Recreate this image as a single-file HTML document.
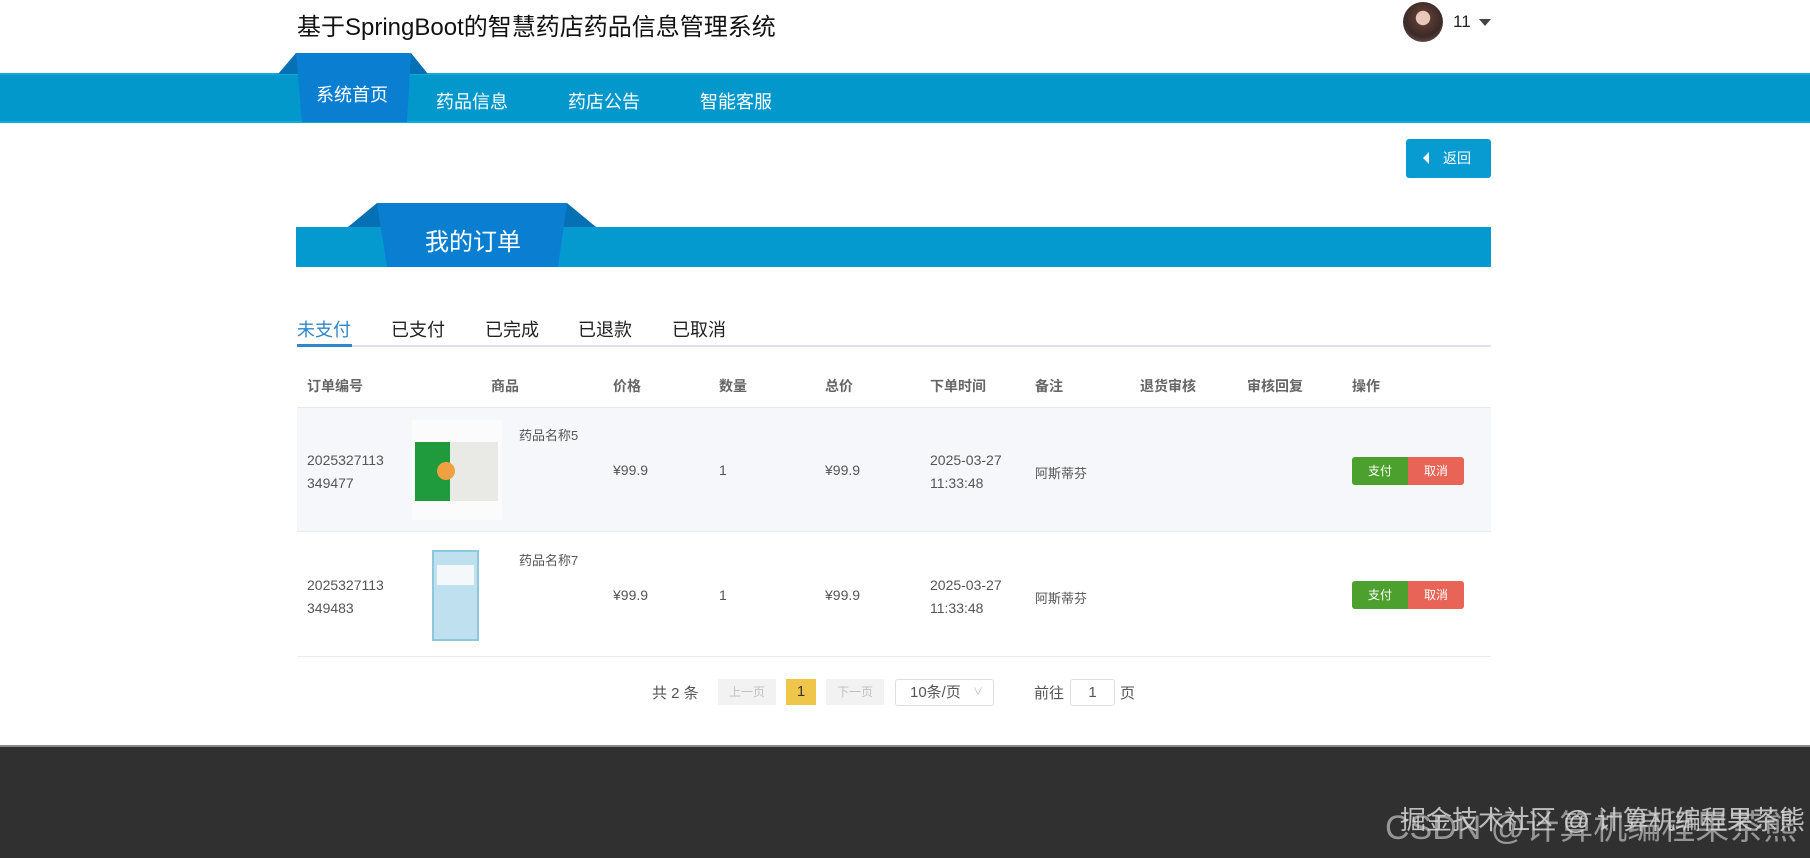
<!DOCTYPE html>
<html><head><meta charset="utf-8">
<style>
*{margin:0;padding:0;box-sizing:border-box}
body{width:1810px;height:858px;position:relative;background:#fff;font-family:"Liberation Sans","Noto Sans CJK SC",sans-serif;overflow:hidden;color:#333}
.a{position:absolute;white-space:nowrap}
.hd{font-size:14px;font-weight:bold;color:#666;top:376px}
.td{font-size:14px;color:#555}
</style></head><body>
<div class="a" style="left:297px;top:7px;font-size:24px;color:#111">基于SpringBoot的智慧药店药品信息管理系统</div>
<div class="a" style="left:1403px;top:2px;width:40px;height:40px;border-radius:50%;background:radial-gradient(circle at 50% 40%,#e8c8b8 0 22%,#5a3a30 24%,#3a2a28 60%,#8a7068 100%)"></div>
<div class="a" style="left:1453px;top:12px;font-size:17px;color:#222">11</div>
<div class="a" style="left:1479px;top:19px;width:0;height:0;border-left:6px solid transparent;border-right:6px solid transparent;border-top:7px solid #444"></div>
<div class="a" style="left:0;top:73px;width:1810px;height:50px;background:#0398cc;border-top:2px solid #12a8d8;border-bottom:2px solid #12a8d8"></div>
<svg class="a" style="left:270px;top:52px" width="170" height="72">
<polygon points="8,22 26,1 141,1 158,22" fill="#0670b5"/>
<polygon points="26,1 141,1 137,70 32,70" fill="#0a7fd2"/>
</svg>
<div class="a" style="left:316px;top:81px;font-size:18px;color:#fff">系统首页</div>
<div class="a" style="left:436px;top:88px;font-size:18px;color:#fff">药品信息</div>
<div class="a" style="left:568px;top:88px;font-size:18px;color:#fff">药店公告</div>
<div class="a" style="left:700px;top:88px;font-size:18px;color:#fff">智能客服</div>
<div class="a" style="left:1406px;top:139px;width:85px;height:39px;background:#079bd1;border-radius:3px;color:#fff;font-size:14px;line-height:39px;padding-left:37px">返回</div>
<div class="a" style="left:1423px;top:152px;width:0;height:0;border-top:6px solid transparent;border-bottom:6px solid transparent;border-right:6px solid #fff"></div>
<div class="a" style="left:296px;top:227px;width:1195px;height:40px;background:#049ad0"></div>
<svg class="a" style="left:340px;top:202px" width="270" height="66">
<polygon points="8,25 37,1 227,1 256,25" fill="#0670b5"/>
<polygon points="37,1 227,1 218,65 47,65" fill="#0a7fd2"/>
</svg>
<div class="a" style="left:425px;top:222px;font-size:24px;color:#fff">我的订单</div>
<div class="a" style="left:297px;top:316px;font-size:18px;color:#2f86c8">未支付</div>
<div class="a" style="left:391px;top:316px;font-size:18px;color:#222">已支付</div>
<div class="a" style="left:485px;top:316px;font-size:18px;color:#222">已完成</div>
<div class="a" style="left:578px;top:316px;font-size:18px;color:#222">已退款</div>
<div class="a" style="left:672px;top:316px;font-size:18px;color:#222">已取消</div>
<div class="a" style="left:297px;top:345px;width:1194px;height:2px;background:#dde3ea"></div>
<div class="a" style="left:297px;top:344px;width:55px;height:3px;background:#2f86c8"></div>
<div class="a hd" style="left:307px">订单编号</div>
<div class="a hd" style="left:491px">商品</div>
<div class="a hd" style="left:613px">价格</div>
<div class="a hd" style="left:719px">数量</div>
<div class="a hd" style="left:825px">总价</div>
<div class="a hd" style="left:930px">下单时间</div>
<div class="a hd" style="left:1035px">备注</div>
<div class="a hd" style="left:1140px">退货审核</div>
<div class="a hd" style="left:1247px">审核回复</div>
<div class="a hd" style="left:1352px">操作</div>
<div class="a" style="left:297px;top:407px;width:1194px;height:1px;background:#e6e9ee"></div>
<div class="a" style="left:297px;top:408px;width:1194px;height:124px;background:#f5f7fa;border-bottom:1px solid #e9ecf0"></div>
<div class="a" style="left:412px;top:420px;width:90px;height:100px;background:#fbfbfc"></div>
<div class="a" style="left:415px;top:442px;width:83px;height:59px;background:#e9e9e6"></div>
<div class="a" style="left:415px;top:442px;width:35px;height:59px;background:#1f9a3c"></div>
<div class="a" style="left:437px;top:462px;width:18px;height:18px;border-radius:50%;background:#f0a040"></div>
<div class="a" style="left:297px;top:656px;width:1194px;height:1px;background:#e9ecf0"></div>
<div class="a" style="left:432px;top:550px;width:47px;height:91px;background:#bfe0ee;border:2px solid #8ec8de"></div>
<div class="a" style="left:437px;top:565px;width:37px;height:20px;background:#f4f8fa"></div>
<div class="a td" style="left:307px;top:449px;line-height:23px">2025327113<br>349477</div>
<div class="a td" style="left:519px;top:425px;font-size:13px">药品名称5</div>
<div class="a td" style="left:613px;top:462px">¥99.9</div>
<div class="a td" style="left:719px;top:462px">1</div>
<div class="a td" style="left:825px;top:462px">¥99.9</div>
<div class="a td" style="left:930px;top:449px;line-height:23px">2025-03-27<br>11:33:48</div>
<div class="a td" style="left:1035px;top:463px;font-size:13px">阿斯蒂芬</div>
<div class="a" style="left:1352px;top:457px;width:56px;height:28px;background:#4ca12e;border-radius:3px 0 0 3px;color:#fff;font-size:12px;text-align:center;line-height:28px">支付</div>
<div class="a" style="left:1408px;top:457px;width:56px;height:28px;background:#e86457;border-radius:0 3px 3px 0;color:#fff;font-size:12px;text-align:center;line-height:28px">取消</div>
<div class="a td" style="left:307px;top:574px;line-height:23px">2025327113<br>349483</div>
<div class="a td" style="left:519px;top:550px;font-size:13px">药品名称7</div>
<div class="a td" style="left:613px;top:587px">¥99.9</div>
<div class="a td" style="left:719px;top:587px">1</div>
<div class="a td" style="left:825px;top:587px">¥99.9</div>
<div class="a td" style="left:930px;top:574px;line-height:23px">2025-03-27<br>11:33:48</div>
<div class="a td" style="left:1035px;top:588px;font-size:13px">阿斯蒂芬</div>
<div class="a" style="left:1352px;top:581px;width:56px;height:28px;background:#4ca12e;border-radius:3px 0 0 3px;color:#fff;font-size:12px;text-align:center;line-height:28px">支付</div>
<div class="a" style="left:1408px;top:581px;width:56px;height:28px;background:#e86457;border-radius:0 3px 3px 0;color:#fff;font-size:12px;text-align:center;line-height:28px">取消</div>
<div class="a" style="left:652px;top:682px;font-size:15px;color:#555">共 2 条</div>
<div class="a" style="left:718px;top:679px;width:58px;height:26px;background:#f2f2f2;color:#c0c0c0;font-size:12px;text-align:center;line-height:26px">上一页</div>
<div class="a" style="left:786px;top:679px;width:30px;height:26px;background:#f0c64a;color:#333;font-size:15px;text-align:center;line-height:26px">1</div>
<div class="a" style="left:826px;top:679px;width:58px;height:26px;background:#f2f2f2;color:#c0c0c0;font-size:12px;text-align:center;line-height:26px">下一页</div>
<div class="a" style="left:895px;top:679px;width:99px;height:27px;border:1px solid #dcdfe6;border-radius:3px;color:#555;font-size:15px;line-height:25px;padding-left:14px">10条/页<span style="position:absolute;right:10px;color:#bbb;font-size:10px">∨</span></div>
<div class="a" style="left:1034px;top:682px;font-size:15px;color:#555">前往</div>
<div class="a" style="left:1070px;top:679px;width:45px;height:27px;border:1px solid #dcdfe6;border-radius:3px;color:#555;font-size:15px;text-align:center;line-height:25px">1</div>
<div class="a" style="left:1120px;top:682px;font-size:15px;color:#555">页</div>
<div class="a" style="left:0;top:745px;width:1810px;height:113px;background:#303030;border-top:2px solid #888"></div>
<div class="a" style="left:1385px;top:800px;font-size:34px;color:#b0b0b0;opacity:.8">CSDN @计算机编程果茶熊</div>
<div class="a" style="left:1400px;top:800px;font-size:26px;color:#d8d8d8;opacity:.85">掘金技术社区 @ 计算机编程果茶熊</div>
</body></html>
